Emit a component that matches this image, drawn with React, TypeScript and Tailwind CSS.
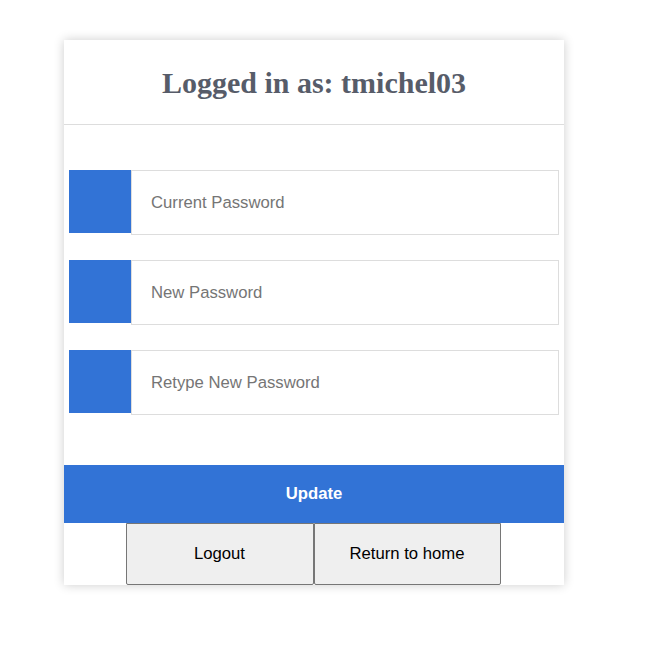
import React from "react";

const fields = ["Current Password", "New Password", "Retype New Password"];

export default function App() {
  return (
    <div className="min-h-screen bg-white pt-[40px] pl-[64px]">
      <div className="w-[500px] bg-white shadow-[0_0_10px_rgba(0,0,0,0.2)]">
        {/* Header */}
        <div className="h-[85px] flex items-center justify-center border-b border-[#dddddd]">
          <h1 className="font-['Liberation_Serif',serif] font-bold text-[30px] text-[#575c69] leading-none mt-[1px]">
            Logged in as: tmichel03
          </h1>
        </div>

        {/* Password fields */}
        <div className="pt-[45px] px-[5px] flex flex-col gap-[25px]">
          {fields.map((label) => (
            <div key={label} className="flex items-start">
              <div className="w-[62px] h-[63px] bg-[#3273d6]" />
              <input
                type="password"
                placeholder={label}
                className="flex-1 h-[65px] border border-[#dddddd] pl-[19px] text-[16.7px] font-['Liberation_Sans',Arial,sans-serif] placeholder:text-[#757575] outline-none"
              />
            </div>
          ))}
        </div>

        <button className="mt-[50px] w-full h-[58px] bg-[#3273d6] text-white font-bold text-[16.7px] font-['Liberation_Sans',Arial,sans-serif]">
          Update
        </button>

        <div className="flex justify-center pr-[2px]">
          <button className="w-[188px] h-[62px] bg-[#efefef] border border-[#767676] rounded-b-[2px] text-[16.7px] text-black font-['Liberation_Sans',Arial,sans-serif]">
            Logout
          </button>
          <button className="w-[187px] h-[62px] bg-[#efefef] border border-[#767676] rounded-b-[2px] text-[16.7px] text-black font-['Liberation_Sans',Arial,sans-serif]">
            Return to home
          </button>
        </div>
      </div>
    </div>
  );
}
